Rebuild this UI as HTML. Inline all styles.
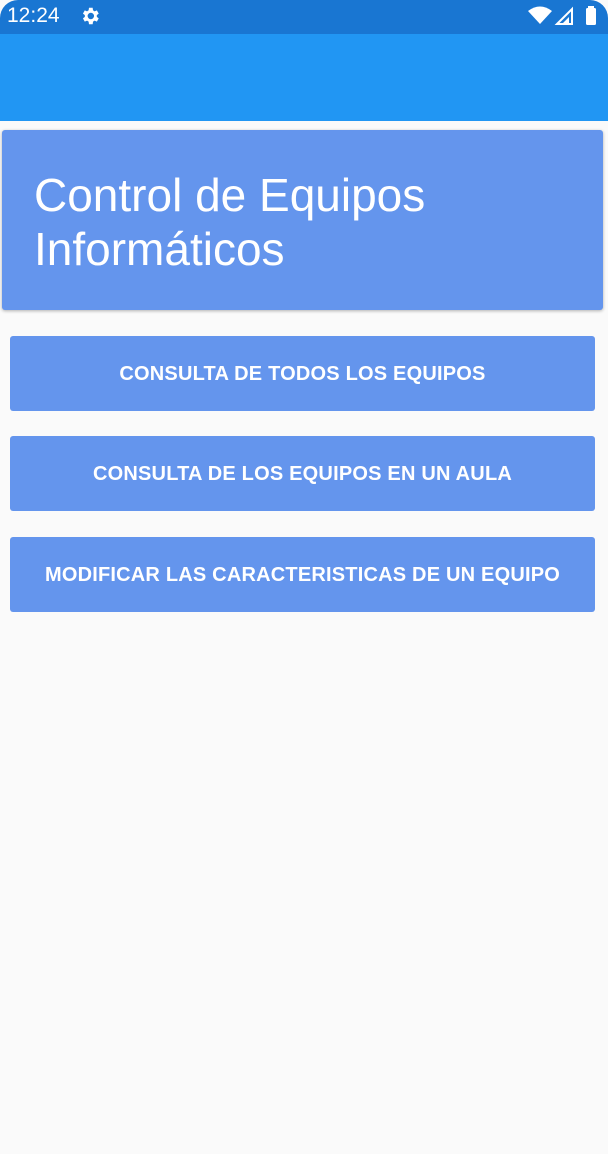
<!DOCTYPE html>
<html><head><style>
body{margin:0;width:608px;height:1154px;background:#fafafa;font-family:"Liberation Sans",sans-serif;position:relative;overflow:hidden}
.sb{position:absolute;left:0;top:0;width:608px;height:34px;background:#1976d2;border-radius:18px 18px 0 0}
.ab{position:absolute;left:0;top:34px;width:608px;height:87px;background:#2196f3}
.card{position:absolute;left:2px;top:130px;width:601px;height:180px;background:#6495ed;border-radius:3px;box-shadow:0 1px 3px rgba(0,0,0,.3)}
.card div{position:absolute;left:32px;top:38px;color:#fff;font-size:46px;line-height:54px}
.btn{position:absolute;left:10px;width:585px;height:75px;background:#6495ed;border-radius:3px;color:#fff;font-size:20px;font-weight:bold;text-align:center;line-height:76px;letter-spacing:.2px}
</style></head><body>
<div class="sb"></div>
<div style="position:absolute;left:7px;top:4px;color:#fff;font-size:21px">12:24</div>
<svg style="position:absolute;left:79px;top:5px" width="22" height="22" viewBox="0 0 24 24"><path fill="#fff" d="M19.4 13a7.5 7.5 0 0 0 0-2l2.1-1.6-2-3.5-2.5 1a7 7 0 0 0-1.7-1L14.9 3h-4l-.4 2.9a7 7 0 0 0-1.7 1l-2.5-1-2 3.5L6.4 11a7.5 7.5 0 0 0 0 2l-2.1 1.6 2 3.5 2.5-1a7 7 0 0 0 1.7 1l.4 2.9h4l.4-2.9a7 7 0 0 0 1.7-1l2.5 1 2-3.5zM12.9 15.5a3.5 3.5 0 1 1 0-7 3.5 3.5 0 0 1 0 7z"/></svg>
<svg style="position:absolute;left:526px;top:5px" width="76" height="22" viewBox="0 0 76 22"><path fill="#fff" d="M2 6Q14-3 26 6L14 19z"/><path fill="none" stroke="#fff" stroke-width="2" d="M31 19L46 4V19z"/><path fill="#fff" d="M36 19L43 12V19z"/><rect x="60" y="3" width="10" height="17" rx="1.5" fill="#fff"/><rect x="62" y="1" width="6" height="3" fill="#fff"/></svg>
<div class="ab"></div>
<div class="card"><div>Control de Equipos<br>Informáticos</div></div>
<div class="btn" style="top:336px">CONSULTA DE TODOS LOS EQUIPOS</div>
<div class="btn" style="top:436px">CONSULTA DE LOS EQUIPOS EN UN AULA</div>
<div class="btn" style="top:537px">MODIFICAR LAS CARACTERISTICAS DE UN EQUIPO</div>
</body></html>
